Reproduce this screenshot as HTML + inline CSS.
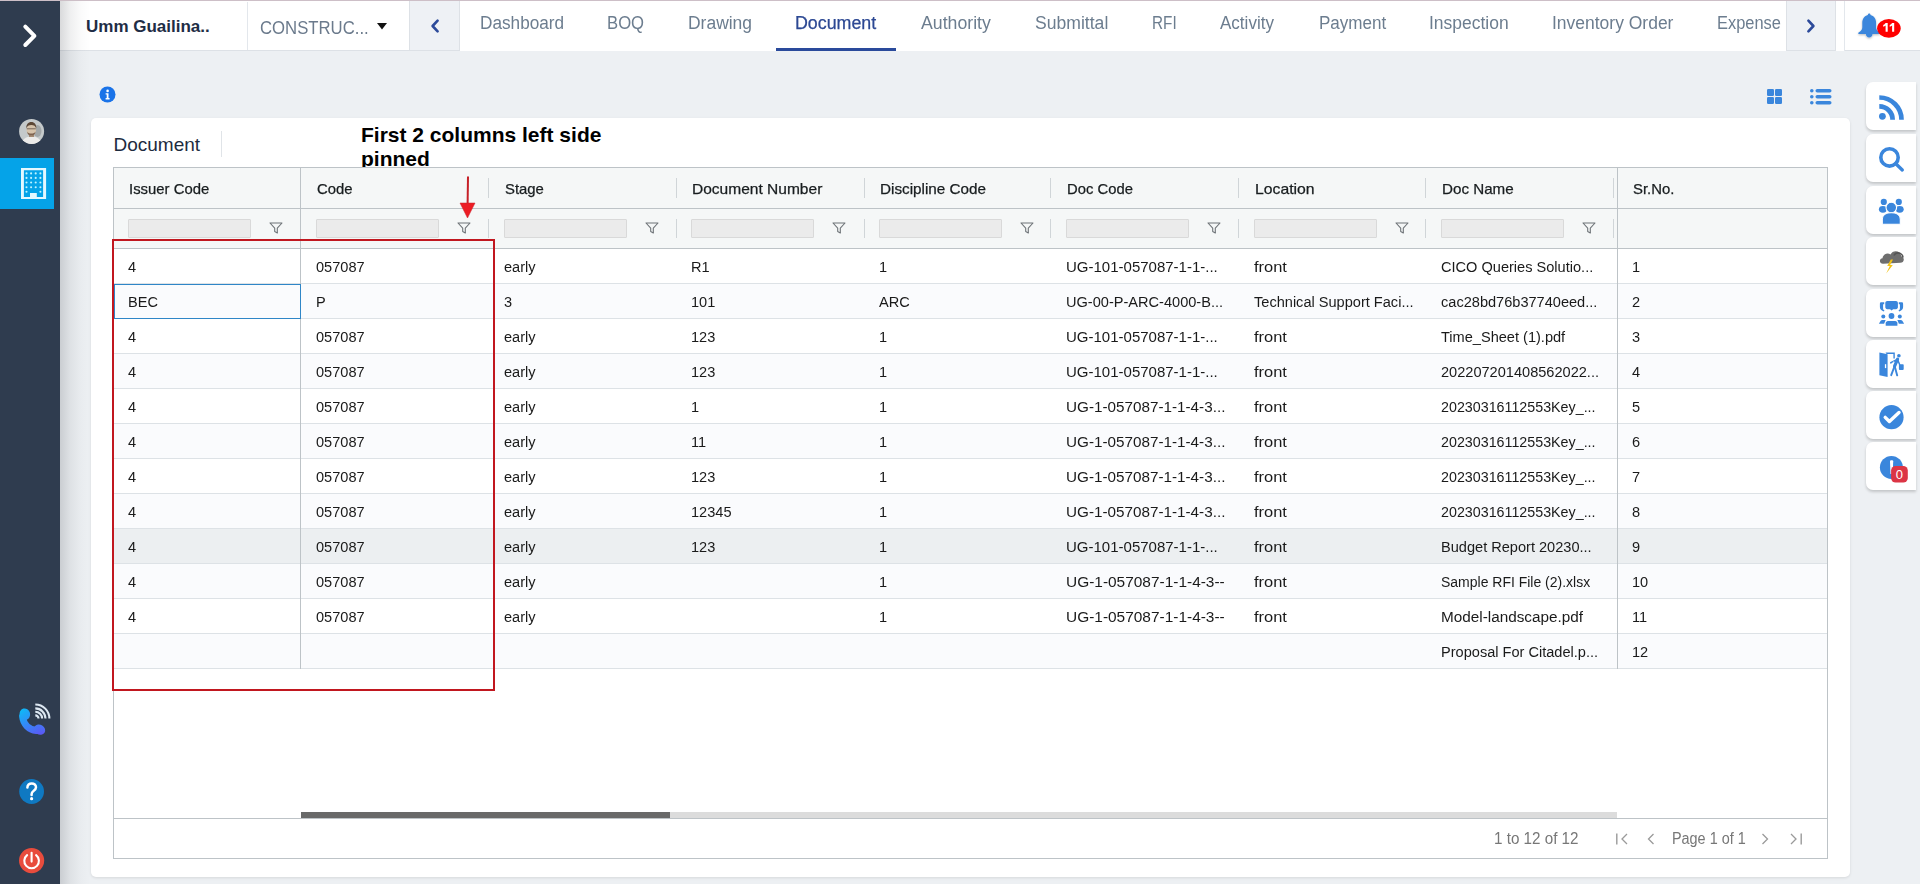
<!DOCTYPE html><html><head><meta charset="utf-8"><style>
*{box-sizing:border-box;margin:0;padding:0}
html,body{width:1920px;height:884px;overflow:hidden;background:#edf0f3;font-family:"Liberation Sans",sans-serif;position:relative}
.a{position:absolute}
.t{position:absolute;white-space:nowrap;line-height:1}
.tab{position:absolute;top:14px;font-size:18px;color:#6c7d8f;white-space:nowrap;line-height:1}
.hd{position:absolute;top:182px;font-size:14.6px;color:#181d1f;white-space:nowrap;line-height:1;-webkit-text-stroke:0.25px #181d1f}
.cell{position:absolute;font-size:15.5px;color:#1a1a1a;white-space:nowrap;line-height:1;transform:scaleX(0.94);transform-origin:0 0}
.fin{position:absolute;top:219px;width:123px;height:19px;background:#ebebeb;border:1px solid #d9d9d9;border-radius:1px}
.rb{position:absolute;left:1866px;width:50px;height:48px;background:#fff;border-radius:7px 0 0 7px;box-shadow:0 2px 3px rgba(0,0,0,0.18)}
</style></head><body>
<div class="a" style="left:60px;top:0;width:1860px;height:51px;background:#fff"></div><div class="a" style="left:60px;top:50px;width:350px;height:1px;background:#dde1e6"></div><div class="a" style="left:1844px;top:50px;width:76px;height:1px;background:#dde1e6"></div><div class="a" style="left:0;top:0;width:1920px;height:1px;background:#cdbfc7"></div><div class="t" style="left:86px;top:18px;font-size:17px;font-weight:700;color:#1e2d45">Umm Guailina..</div><div class="a" style="left:247px;top:2px;width:1px;height:48px;background:#e3e7ec"></div><div class="t" style="left:260px;top:18.6px;font-size:18.5px;color:#6b7a8c;transform:scaleX(0.904);transform-origin:0 0">CONSTRUC...</div><svg class="a" style="left:377px;top:23px" width="10" height="7" viewBox="0 0 10 7"><path d="M0 0H10L5 6.5Z" fill="#111"/></svg><div class="a" style="left:409px;top:1px;width:51px;height:50px;background:#eef1f5;border:1px solid #dde1e6;border-top:none"></div><svg class="a" style="left:429px;top:18px" width="12" height="16" viewBox="0 0 12 16"><path d="M8.6 2.6L3.6 8l5 5.4" fill="none" stroke="#2c4a9a" stroke-width="2.6" stroke-linecap="round" stroke-linejoin="round"/></svg><div class="tab" style="left:479.5px;transform:scaleX(0.955);transform-origin:0 0">Dashboard</div><div class="tab" style="left:607.3px;transform:scaleX(0.927);transform-origin:0 0">BOQ</div><div class="tab" style="left:687.9px;transform:scaleX(0.97);transform-origin:0 0">Drawing</div><div class="tab" style="left:795.1px;transform:scaleX(0.99);transform-origin:0 0;color:#2c4893;-webkit-text-stroke:0.25px #2c4893">Document</div><div class="tab" style="left:920.8px;transform:scaleX(0.983);transform-origin:0 0">Authority</div><div class="tab" style="left:1035.3px;transform:scaleX(0.977);transform-origin:0 0">Submittal</div><div class="tab" style="left:1152.2px;transform:scaleX(0.85);transform-origin:0 0">RFI</div><div class="tab" style="left:1219.8px;transform:scaleX(0.946);transform-origin:0 0">Activity</div><div class="tab" style="left:1318.5px;transform:scaleX(0.947);transform-origin:0 0">Payment</div><div class="tab" style="left:1429.2px;transform:scaleX(0.971);transform-origin:0 0">Inspection</div><div class="tab" style="left:1551.9px;transform:scaleX(0.971);transform-origin:0 0">Inventory Order</div><div class="tab" style="left:1716.7px;transform:scaleX(0.912);transform-origin:0 0">Expense</div><div class="a" style="left:776px;top:48px;width:120px;height:3px;background:#2a4a9b"></div><div class="a" style="left:1786px;top:1px;width:50px;height:50px;background:#eef1f5;border:1px solid #dde1e6;border-top:none"></div><svg class="a" style="left:1805px;top:18px" width="12" height="16" viewBox="0 0 12 16"><path d="M3.4 2.6L8.4 8l-5 5.4" fill="none" stroke="#2c4a9a" stroke-width="2.6" stroke-linecap="round" stroke-linejoin="round"/></svg><div class="a" style="left:1844px;top:1px;width:1px;height:50px;background:#e3e7ec"></div><svg class="a" style="left:1850px;top:8px;overflow:visible" width="56" height="36" viewBox="1850 8 56 36"><defs><filter id="bs" x="-30%" y="-30%" width="160%" height="160%"><feDropShadow dx="0" dy="1" stdDeviation="0.8" flood-color="#000" flood-opacity="0.28"/></filter></defs>
<g filter="url(#bs)" fill="#3a86dc"><path d="M1869.2 13.6C1870 13.6 1870.5 14.2 1870.5 14.9C1874 15.7 1876.1 18.7 1876.1 22.6V27.2C1876.1 29.6 1877.6 31.3 1879.8 32.6C1880.5 33 1880.3 34 1879.5 34H1858.9C1858.1 34 1857.9 33 1858.6 32.6C1860.8 31.3 1862.3 29.6 1862.3 27.2V22.6C1862.3 18.7 1864.4 15.7 1867.9 14.9C1867.9 14.2 1868.4 13.6 1869.2 13.6Z"/>
<path d="M1865.9 34H1872.5C1872.5 36 1871 37.5 1869.2 37.5C1867.4 37.5 1865.9 36 1865.9 34Z"/></g>
<ellipse cx="1888.9" cy="28.35" rx="11.8" ry="9.35" fill="#f00"/>
</svg><svg class="a" style="left:1880px;top:20px" width="18" height="14" viewBox="1880 20 18 14"><path d="M1885.6 23H1887.7V31.8H1885.6V25.6C1884.9 26.1 1884.1 26.5 1883.2 26.7V24.9C1884.2 24.6 1885 24 1885.6 23Z M1892.1 23H1894.2V31.8H1892.1V25.6C1891.4 26.1 1890.6 26.5 1889.7 26.7V24.9C1890.7 24.6 1891.5 24 1892.1 23Z" fill="#fff"/></svg><div class="a" style="left:0;top:1px;width:60px;height:883px;background:#2f3c4f"></div><div class="a" style="left:60px;top:1px;width:30px;height:883px;background:linear-gradient(to right,rgba(30,35,45,0.17),rgba(30,35,45,0.07) 35%,rgba(30,35,45,0.02) 70%,rgba(30,35,45,0))"></div><svg class="a" style="left:20px;top:22px" width="20" height="28" viewBox="0 0 20 28"><path d="M5.3 4.6L14.4 13.8L5.3 23" fill="none" stroke="#fff" stroke-width="4" stroke-linecap="round" stroke-linejoin="round"/></svg><svg class="a" style="left:19px;top:118px" width="26" height="27" viewBox="19 118 26 27"><defs><clipPath id="av"><circle cx="31.6" cy="131.4" r="12.5"/></clipPath><filter id="avb"><feGaussianBlur stdDeviation="0.5"/></filter></defs>
<g clip-path="url(#av)"><rect x="19" y="118" width="26" height="27" fill="#c4c9ca"/>
<g filter="url(#avb)">
<ellipse cx="37.5" cy="131" rx="4" ry="6" fill="#8c9192" opacity="0.6"/>
<path d="M21 145C22 139.5 25.5 136.5 31.6 136.5S41 139.5 42.5 145Z" fill="#ecebe9"/>
<rect x="29" y="133" width="5" height="4" fill="#a48a72"/>
<ellipse cx="31.3" cy="129.8" rx="4.8" ry="5.6" fill="#d6c3ab"/>
<path d="M26.3 128.5C26 124.5 28.2 122 31.3 122S36.6 124.5 36.3 128.5C35.6 126 33.8 125 31.3 125S27 126 26.3 128.5Z" fill="#5b4636"/>
<path d="M27 131.5C27.5 134.5 29.2 135.6 31.3 135.6S35.1 134.5 35.6 131.5C34.8 133 33.3 133.6 31.3 133.6S27.8 133 27 131.5Z" fill="#7e6450"/>
<path d="M26.8 128.8H35.8" stroke="#6a5a4e" stroke-width="0.9"/>
</g></g></svg><div class="a" style="left:0;top:158px;width:54px;height:51px;background:#05a3e8"></div><svg class="a" style="left:16px;top:163px" width="36" height="40" viewBox="16 163 36 40"><path d="M21 168H46.1V199H21Z M23.9 170.3V197H30V193H36.8V197H43.1V170.3Z" fill="#e4f8ff" fill-rule="evenodd"/><circle cx="26.5" cy="173.4" r="1.05" fill="#bff4ff"/><circle cx="31.1" cy="173.4" r="1.05" fill="#bff4ff"/><circle cx="35.7" cy="173.4" r="1.05" fill="#bff4ff"/><circle cx="40.4" cy="173.4" r="1.05" fill="#bff4ff"/><circle cx="26.5" cy="177.9" r="1.05" fill="#bff4ff"/><circle cx="31.1" cy="177.9" r="1.05" fill="#bff4ff"/><circle cx="35.7" cy="177.9" r="1.05" fill="#bff4ff"/><circle cx="40.4" cy="177.9" r="1.05" fill="#bff4ff"/><circle cx="26.5" cy="182.5" r="1.05" fill="#bff4ff"/><circle cx="31.1" cy="182.5" r="1.05" fill="#bff4ff"/><circle cx="35.7" cy="182.5" r="1.05" fill="#bff4ff"/><circle cx="40.4" cy="182.5" r="1.05" fill="#bff4ff"/><circle cx="26.5" cy="187.2" r="1.05" fill="#bff4ff"/><circle cx="31.1" cy="187.2" r="1.05" fill="#bff4ff"/><circle cx="35.7" cy="187.2" r="1.05" fill="#bff4ff"/><circle cx="40.4" cy="187.2" r="1.05" fill="#bff4ff"/><circle cx="26.5" cy="191.7" r="1.05" fill="#bff4ff"/><circle cx="40.4" cy="191.7" r="1.05" fill="#bff4ff"/></svg><svg class="a" style="left:14px;top:700px" width="40" height="40" viewBox="14 700 40 40"><defs><linearGradient id="pg" gradientUnits="userSpaceOnUse" x1="22" y1="708" x2="38" y2="735"><stop offset="0" stop-color="#0bbcf7"/><stop offset="1" stop-color="#5a5af5"/></linearGradient></defs>
<g fill="url(#pg)">
<ellipse cx="24.8" cy="714.2" rx="5.3" ry="5.8" transform="rotate(-15 24.8 714.2)"/>
<ellipse cx="39.6" cy="729.6" rx="5.8" ry="4.9" transform="rotate(32 39.6 729.6)"/>
</g>
<path d="M22.6 716.5C23.4 724 28.5 729.5 36.5 730.5" fill="none" stroke="url(#pg)" stroke-width="7" stroke-linecap="round"/>
<g fill="none" stroke="#dde8f2" stroke-width="2.1">
<path d="M35.3 715.4A3.2 3.2 0 0 1 38.5 718.6"/><path d="M35.3 711.8A6.8 6.8 0 0 1 42.1 718.6"/><path d="M35.3 708.4A10.2 10.2 0 0 1 45.5 718.6"/><path d="M35.3 704.5A14.1 14.1 0 0 1 49.4 718.6"/>
</g></svg><svg class="a" style="left:14px;top:774px" width="36" height="104" viewBox="14 774 36 104">
<circle cx="31.6" cy="791.5" r="12.4" fill="#0f79c2"/>
<path d="M27.4 787.6C27.4 785 29.3 783.4 31.7 783.4C34.2 783.4 36 785.1 36 787.3C36 789.2 34.9 790.1 33.5 791C32.3 791.8 31.6 792.6 31.6 794.2V795" fill="none" stroke="#fff" stroke-width="2.5" stroke-linecap="round"/>
<circle cx="31.6" cy="798.7" r="1.6" fill="#fff"/>
<circle cx="31.6" cy="860.6" r="12.6" fill="#e84c3d"/>
<path d="M27.1 855.2A7.3 7.3 0 1 0 36.1 855.2" fill="none" stroke="#fff" stroke-width="2.1" stroke-linecap="round"/>
<path d="M31.6 852.8V861.6" stroke="#fff" stroke-width="2.1" stroke-linecap="round"/>
</svg><svg class="a" style="left:99px;top:86px" width="17" height="17" viewBox="0 0 17 17"><circle cx="8.5" cy="8.5" r="8" fill="#1a73e8"/><circle cx="8.6" cy="4.9" r="1.3" fill="#fff"/><path d="M6.6 7.2h2.9v4.9h1.1v1.4H6.6v-1.4h1.1V8.6H6.6z" fill="#fff"/></svg><svg class="a" style="left:1767px;top:89px" width="15" height="15" viewBox="0 0 15 15"><g fill="#3a86dc"><rect x="0" y="0" width="7" height="7" rx="1.3"/><rect x="8" y="0" width="7" height="7" rx="1.3"/><rect x="0" y="8" width="7" height="7" rx="1.3"/><rect x="8" y="8" width="7" height="7" rx="1.3"/></g></svg><svg class="a" style="left:1810px;top:89px" width="22" height="16" viewBox="0 0 22 16"><g fill="#3a86dc"><circle cx="1.8" cy="1.8" r="1.8"/><circle cx="1.8" cy="7.8" r="1.8"/><circle cx="1.8" cy="13.8" r="1.8"/><rect x="5.5" y="0" width="16" height="3.6" rx="1.8"/><rect x="5.5" y="6" width="16" height="3.6" rx="1.8"/><rect x="5.5" y="12" width="16" height="3.6" rx="1.8"/></g></svg><div class="a" style="left:91px;top:118px;width:1759px;height:759px;background:#fff;border-radius:5px;box-shadow:0 1px 3px rgba(0,0,0,0.10)"></div><div class="t" style="left:113.5px;top:134.5px;font-size:19px;color:#1d2b3e">Document</div><div class="a" style="left:221px;top:131px;width:1px;height:26px;background:#e0e4e8"></div><div class="t" style="left:361px;top:123px;font-size:21px;font-weight:700;color:#000;line-height:24px">First 2 columns left side<br>pinned</div><div class="a" style="left:113px;top:167px;width:1715px;height:692px;border:1px solid #bdc3c7;background:#fff"></div><div class="a" style="left:114px;top:168px;width:1713px;height:80px;background:#f5f7f7"></div><div class="a" style="left:114px;top:208px;width:1713px;height:1px;background:#bdc3c7"></div><div class="a" style="left:114px;top:248px;width:1713px;height:1px;background:#bdc3c7"></div><div class="a" style="left:114px;top:249px;width:1713px;height:34px;background:#fff"></div><div class="a" style="left:114px;top:283px;width:1713px;height:1px;background:#dde2e6"></div><div class="cell" style="left:128.2px;top:259px;transform:scaleX(0.940)">4</div><div class="cell" style="left:315.7px;top:259px;transform:scaleX(0.940)">057087</div><div class="cell" style="left:503.7px;top:259px;transform:scaleX(0.940)">early</div><div class="cell" style="left:691.2px;top:259px;transform:scaleX(0.940)">R1</div><div class="cell" style="left:878.7px;top:259px;transform:scaleX(0.940)">1</div><div class="cell" style="left:1066.2px;top:259px;transform:scaleX(0.968)">UG-101-057087-1-1-...</div><div class="cell" style="left:1253.7px;top:259px;transform:scaleX(1.062)">front</div><div class="cell" style="left:1441.2px;top:259px;transform:scaleX(0.940)">CICO Queries Solutio...</div><div class="cell" style="left:1632.2px;top:259px;transform:scaleX(0.940)">1</div><div class="a" style="left:114px;top:284px;width:1713px;height:34px;background:#fafbfd"></div><div class="a" style="left:114px;top:318px;width:1713px;height:1px;background:#dde2e6"></div><div class="cell" style="left:128.2px;top:294px;transform:scaleX(0.940)">BEC</div><div class="cell" style="left:315.7px;top:294px;transform:scaleX(0.940)">P</div><div class="cell" style="left:503.7px;top:294px;transform:scaleX(0.940)">3</div><div class="cell" style="left:691.2px;top:294px;transform:scaleX(0.940)">101</div><div class="cell" style="left:878.7px;top:294px;transform:scaleX(0.940)">ARC</div><div class="cell" style="left:1066.2px;top:294px;transform:scaleX(0.940)">UG-00-P-ARC-4000-B...</div><div class="cell" style="left:1253.7px;top:294px;transform:scaleX(0.940)">Technical Support Faci...</div><div class="cell" style="left:1441.2px;top:294px;transform:scaleX(0.940)">cac28bd76b37740eed...</div><div class="cell" style="left:1632.2px;top:294px;transform:scaleX(0.940)">2</div><div class="a" style="left:114px;top:319px;width:1713px;height:34px;background:#fff"></div><div class="a" style="left:114px;top:353px;width:1713px;height:1px;background:#dde2e6"></div><div class="cell" style="left:128.2px;top:329px;transform:scaleX(0.940)">4</div><div class="cell" style="left:315.7px;top:329px;transform:scaleX(0.940)">057087</div><div class="cell" style="left:503.7px;top:329px;transform:scaleX(0.940)">early</div><div class="cell" style="left:691.2px;top:329px;transform:scaleX(0.940)">123</div><div class="cell" style="left:878.7px;top:329px;transform:scaleX(0.940)">1</div><div class="cell" style="left:1066.2px;top:329px;transform:scaleX(0.968)">UG-101-057087-1-1-...</div><div class="cell" style="left:1253.7px;top:329px;transform:scaleX(1.062)">front</div><div class="cell" style="left:1441.2px;top:329px;transform:scaleX(0.940)">Time_Sheet (1).pdf</div><div class="cell" style="left:1632.2px;top:329px;transform:scaleX(0.940)">3</div><div class="a" style="left:114px;top:354px;width:1713px;height:34px;background:#fafbfd"></div><div class="a" style="left:114px;top:388px;width:1713px;height:1px;background:#dde2e6"></div><div class="cell" style="left:128.2px;top:364px;transform:scaleX(0.940)">4</div><div class="cell" style="left:315.7px;top:364px;transform:scaleX(0.940)">057087</div><div class="cell" style="left:503.7px;top:364px;transform:scaleX(0.940)">early</div><div class="cell" style="left:691.2px;top:364px;transform:scaleX(0.940)">123</div><div class="cell" style="left:878.7px;top:364px;transform:scaleX(0.940)">1</div><div class="cell" style="left:1066.2px;top:364px;transform:scaleX(0.968)">UG-101-057087-1-1-...</div><div class="cell" style="left:1253.7px;top:364px;transform:scaleX(1.062)">front</div><div class="cell" style="left:1441.2px;top:364px;transform:scaleX(0.940)">202207201408562022...</div><div class="cell" style="left:1632.2px;top:364px;transform:scaleX(0.940)">4</div><div class="a" style="left:114px;top:389px;width:1713px;height:34px;background:#fff"></div><div class="a" style="left:114px;top:423px;width:1713px;height:1px;background:#dde2e6"></div><div class="cell" style="left:128.2px;top:399px;transform:scaleX(0.940)">4</div><div class="cell" style="left:315.7px;top:399px;transform:scaleX(0.940)">057087</div><div class="cell" style="left:503.7px;top:399px;transform:scaleX(0.940)">early</div><div class="cell" style="left:691.2px;top:399px;transform:scaleX(0.940)">1</div><div class="cell" style="left:878.7px;top:399px;transform:scaleX(0.940)">1</div><div class="cell" style="left:1066.2px;top:399px;transform:scaleX(0.984)">UG-1-057087-1-1-4-3...</div><div class="cell" style="left:1253.7px;top:399px;transform:scaleX(1.062)">front</div><div class="cell" style="left:1441.2px;top:399px;transform:scaleX(0.921)">20230316112553Key_...</div><div class="cell" style="left:1632.2px;top:399px;transform:scaleX(0.940)">5</div><div class="a" style="left:114px;top:424px;width:1713px;height:34px;background:#fafbfd"></div><div class="a" style="left:114px;top:458px;width:1713px;height:1px;background:#dde2e6"></div><div class="cell" style="left:128.2px;top:434px;transform:scaleX(0.940)">4</div><div class="cell" style="left:315.7px;top:434px;transform:scaleX(0.940)">057087</div><div class="cell" style="left:503.7px;top:434px;transform:scaleX(0.940)">early</div><div class="cell" style="left:691.2px;top:434px;transform:scaleX(0.940)">11</div><div class="cell" style="left:878.7px;top:434px;transform:scaleX(0.940)">1</div><div class="cell" style="left:1066.2px;top:434px;transform:scaleX(0.984)">UG-1-057087-1-1-4-3...</div><div class="cell" style="left:1253.7px;top:434px;transform:scaleX(1.062)">front</div><div class="cell" style="left:1441.2px;top:434px;transform:scaleX(0.921)">20230316112553Key_...</div><div class="cell" style="left:1632.2px;top:434px;transform:scaleX(0.940)">6</div><div class="a" style="left:114px;top:459px;width:1713px;height:34px;background:#fff"></div><div class="a" style="left:114px;top:493px;width:1713px;height:1px;background:#dde2e6"></div><div class="cell" style="left:128.2px;top:469px;transform:scaleX(0.940)">4</div><div class="cell" style="left:315.7px;top:469px;transform:scaleX(0.940)">057087</div><div class="cell" style="left:503.7px;top:469px;transform:scaleX(0.940)">early</div><div class="cell" style="left:691.2px;top:469px;transform:scaleX(0.940)">123</div><div class="cell" style="left:878.7px;top:469px;transform:scaleX(0.940)">1</div><div class="cell" style="left:1066.2px;top:469px;transform:scaleX(0.984)">UG-1-057087-1-1-4-3...</div><div class="cell" style="left:1253.7px;top:469px;transform:scaleX(1.062)">front</div><div class="cell" style="left:1441.2px;top:469px;transform:scaleX(0.921)">20230316112553Key_...</div><div class="cell" style="left:1632.2px;top:469px;transform:scaleX(0.940)">7</div><div class="a" style="left:114px;top:494px;width:1713px;height:34px;background:#fafbfd"></div><div class="a" style="left:114px;top:528px;width:1713px;height:1px;background:#dde2e6"></div><div class="cell" style="left:128.2px;top:504px;transform:scaleX(0.940)">4</div><div class="cell" style="left:315.7px;top:504px;transform:scaleX(0.940)">057087</div><div class="cell" style="left:503.7px;top:504px;transform:scaleX(0.940)">early</div><div class="cell" style="left:691.2px;top:504px;transform:scaleX(0.940)">12345</div><div class="cell" style="left:878.7px;top:504px;transform:scaleX(0.940)">1</div><div class="cell" style="left:1066.2px;top:504px;transform:scaleX(0.984)">UG-1-057087-1-1-4-3...</div><div class="cell" style="left:1253.7px;top:504px;transform:scaleX(1.062)">front</div><div class="cell" style="left:1441.2px;top:504px;transform:scaleX(0.921)">20230316112553Key_...</div><div class="cell" style="left:1632.2px;top:504px;transform:scaleX(0.940)">8</div><div class="a" style="left:114px;top:529px;width:1713px;height:34px;background:#eceff1"></div><div class="a" style="left:114px;top:563px;width:1713px;height:1px;background:#dde2e6"></div><div class="cell" style="left:128.2px;top:539px;transform:scaleX(0.940)">4</div><div class="cell" style="left:315.7px;top:539px;transform:scaleX(0.940)">057087</div><div class="cell" style="left:503.7px;top:539px;transform:scaleX(0.940)">early</div><div class="cell" style="left:691.2px;top:539px;transform:scaleX(0.940)">123</div><div class="cell" style="left:878.7px;top:539px;transform:scaleX(0.940)">1</div><div class="cell" style="left:1066.2px;top:539px;transform:scaleX(0.968)">UG-101-057087-1-1-...</div><div class="cell" style="left:1253.7px;top:539px;transform:scaleX(1.062)">front</div><div class="cell" style="left:1441.2px;top:539px;transform:scaleX(0.940)">Budget Report 20230...</div><div class="cell" style="left:1632.2px;top:539px;transform:scaleX(0.940)">9</div><div class="a" style="left:114px;top:564px;width:1713px;height:34px;background:#fafbfd"></div><div class="a" style="left:114px;top:598px;width:1713px;height:1px;background:#dde2e6"></div><div class="cell" style="left:128.2px;top:574px;transform:scaleX(0.940)">4</div><div class="cell" style="left:315.7px;top:574px;transform:scaleX(0.940)">057087</div><div class="cell" style="left:503.7px;top:574px;transform:scaleX(0.940)">early</div><div class="cell" style="left:878.7px;top:574px;transform:scaleX(0.940)">1</div><div class="cell" style="left:1066.2px;top:574px;transform:scaleX(0.996)">UG-1-057087-1-1-4-3--</div><div class="cell" style="left:1253.7px;top:574px;transform:scaleX(1.062)">front</div><div class="cell" style="left:1441.2px;top:574px;transform:scaleX(0.902)">Sample RFI File (2).xlsx</div><div class="cell" style="left:1632.2px;top:574px;transform:scaleX(0.940)">10</div><div class="a" style="left:114px;top:599px;width:1713px;height:34px;background:#fff"></div><div class="a" style="left:114px;top:633px;width:1713px;height:1px;background:#dde2e6"></div><div class="cell" style="left:128.2px;top:609px;transform:scaleX(0.940)">4</div><div class="cell" style="left:315.7px;top:609px;transform:scaleX(0.940)">057087</div><div class="cell" style="left:503.7px;top:609px;transform:scaleX(0.940)">early</div><div class="cell" style="left:878.7px;top:609px;transform:scaleX(0.940)">1</div><div class="cell" style="left:1066.2px;top:609px;transform:scaleX(0.996)">UG-1-057087-1-1-4-3--</div><div class="cell" style="left:1253.7px;top:609px;transform:scaleX(1.062)">front</div><div class="cell" style="left:1441.2px;top:609px;transform:scaleX(0.987)">Model-landscape.pdf</div><div class="cell" style="left:1632.2px;top:609px;transform:scaleX(0.940)">11</div><div class="a" style="left:114px;top:634px;width:1713px;height:34px;background:#fafbfd"></div><div class="a" style="left:114px;top:668px;width:1713px;height:1px;background:#dde2e6"></div><div class="cell" style="left:1441.2px;top:644px;transform:scaleX(0.940)">Proposal For Citadel.p...</div><div class="cell" style="left:1632.2px;top:644px;transform:scaleX(0.940)">12</div><div class="a" style="left:300px;top:168px;width:1px;height:501px;background:#bdc3c7"></div><div class="a" style="left:1617px;top:168px;width:1px;height:501px;background:#bdc3c7"></div><div class="a" style="left:114px;top:284px;width:187px;height:35px;border:1px solid #2f86c7;background:transparent"></div><div class="hd" style="left:129px;transform:scaleX(1.02);transform-origin:0 0">Issuer Code</div><div class="hd" style="left:316.5px;transform:scaleX(1.02);transform-origin:0 0">Code</div><div class="hd" style="left:504.5px;transform:scaleX(1.02);transform-origin:0 0">Stage</div><div class="hd" style="left:692px;transform:scaleX(1.064);transform-origin:0 0">Document Number</div><div class="hd" style="left:879.5px;transform:scaleX(1.046);transform-origin:0 0">Discipline Code</div><div class="hd" style="left:1067px;transform:scaleX(1.016);transform-origin:0 0">Doc Code</div><div class="hd" style="left:1254.5px;transform:scaleX(1.08);transform-origin:0 0">Location</div><div class="hd" style="left:1442px;transform:scaleX(1.04);transform-origin:0 0">Doc Name</div><div class="hd" style="left:1633px;transform:scaleX(1.02);transform-origin:0 0">Sr.No.</div><div class="fin" style="left:128px"></div><svg class="a" style="left:269px;top:222px" width="14" height="12" viewBox="0 0 14 12"><path d="M1 1h12L8.3 6.2V11L5.7 9.6V6.2z" fill="none" stroke="#6f7478" stroke-width="1.1" stroke-linejoin="round"/></svg><div class="fin" style="left:315.5px"></div><svg class="a" style="left:456.5px;top:222px" width="14" height="12" viewBox="0 0 14 12"><path d="M1 1h12L8.3 6.2V11L5.7 9.6V6.2z" fill="none" stroke="#6f7478" stroke-width="1.1" stroke-linejoin="round"/></svg><div class="fin" style="left:503.5px"></div><svg class="a" style="left:644.5px;top:222px" width="14" height="12" viewBox="0 0 14 12"><path d="M1 1h12L8.3 6.2V11L5.7 9.6V6.2z" fill="none" stroke="#6f7478" stroke-width="1.1" stroke-linejoin="round"/></svg><div class="fin" style="left:691px"></div><svg class="a" style="left:832px;top:222px" width="14" height="12" viewBox="0 0 14 12"><path d="M1 1h12L8.3 6.2V11L5.7 9.6V6.2z" fill="none" stroke="#6f7478" stroke-width="1.1" stroke-linejoin="round"/></svg><div class="fin" style="left:878.5px"></div><svg class="a" style="left:1019.5px;top:222px" width="14" height="12" viewBox="0 0 14 12"><path d="M1 1h12L8.3 6.2V11L5.7 9.6V6.2z" fill="none" stroke="#6f7478" stroke-width="1.1" stroke-linejoin="round"/></svg><div class="fin" style="left:1066px"></div><svg class="a" style="left:1207px;top:222px" width="14" height="12" viewBox="0 0 14 12"><path d="M1 1h12L8.3 6.2V11L5.7 9.6V6.2z" fill="none" stroke="#6f7478" stroke-width="1.1" stroke-linejoin="round"/></svg><div class="fin" style="left:1253.5px"></div><svg class="a" style="left:1394.5px;top:222px" width="14" height="12" viewBox="0 0 14 12"><path d="M1 1h12L8.3 6.2V11L5.7 9.6V6.2z" fill="none" stroke="#6f7478" stroke-width="1.1" stroke-linejoin="round"/></svg><div class="fin" style="left:1441px"></div><svg class="a" style="left:1582px;top:222px" width="14" height="12" viewBox="0 0 14 12"><path d="M1 1h12L8.3 6.2V11L5.7 9.6V6.2z" fill="none" stroke="#6f7478" stroke-width="1.1" stroke-linejoin="round"/></svg><div class="a" style="left:488px;top:178px;width:1px;height:20px;background:#d0d5d8"></div><div class="a" style="left:488px;top:219px;width:1px;height:19px;background:#d0d5d8"></div><div class="a" style="left:676px;top:178px;width:1px;height:20px;background:#d0d5d8"></div><div class="a" style="left:676px;top:219px;width:1px;height:19px;background:#d0d5d8"></div><div class="a" style="left:864px;top:178px;width:1px;height:20px;background:#d0d5d8"></div><div class="a" style="left:864px;top:219px;width:1px;height:19px;background:#d0d5d8"></div><div class="a" style="left:1050px;top:178px;width:1px;height:20px;background:#d0d5d8"></div><div class="a" style="left:1050px;top:219px;width:1px;height:19px;background:#d0d5d8"></div><div class="a" style="left:1238px;top:178px;width:1px;height:20px;background:#d0d5d8"></div><div class="a" style="left:1238px;top:219px;width:1px;height:19px;background:#d0d5d8"></div><div class="a" style="left:1425px;top:178px;width:1px;height:20px;background:#d0d5d8"></div><div class="a" style="left:1425px;top:219px;width:1px;height:19px;background:#d0d5d8"></div><div class="a" style="left:1613px;top:178px;width:1px;height:20px;background:#d0d5d8"></div><div class="a" style="left:1613px;top:219px;width:1px;height:19px;background:#d0d5d8"></div><div class="a" style="left:301px;top:812px;width:1316px;height:6px;background:#dcdcdc"></div><div class="a" style="left:301px;top:812px;width:369px;height:6px;background:#696969"></div><div class="a" style="left:114px;top:818px;width:1713px;height:1px;background:#bdc3c7"></div><div class="t" style="left:1494px;top:831px;font-size:16px;color:#777;transform:scaleX(0.95);transform-origin:0 0">1 to 12 of 12</div><div class="t" style="left:1672px;top:831px;font-size:16px;color:#777;transform:scaleX(0.9);transform-origin:0 0">Page 1 of 1</div><svg class="a" style="left:1615px;top:832px" width="14" height="14" viewBox="0 0 14 14"><path d="M12 2L7 7l5 5" fill="none" stroke="#9a9a9a" stroke-width="1.3"/><path d="M1.8 1.5v11" stroke="#9a9a9a" stroke-width="1.4"/></svg><svg class="a" style="left:1645px;top:832px" width="14" height="14" viewBox="0 0 14 14"><path d="M8.5 2L3.5 7l5 5" fill="none" stroke="#9a9a9a" stroke-width="1.3"/></svg><svg class="a" style="left:1759px;top:832px" width="14" height="14" viewBox="0 0 14 14"><path d="M3.5 2l5 5-5 5" fill="none" stroke="#9a9a9a" stroke-width="1.3"/></svg><svg class="a" style="left:1789px;top:832px" width="14" height="14" viewBox="0 0 14 14"><path d="M2 2l5 5-5 5" fill="none" stroke="#9a9a9a" stroke-width="1.3"/><path d="M12.2 1.5v11" stroke="#9a9a9a" stroke-width="1.4"/></svg><div class="a" style="left:112px;top:239px;width:383px;height:452px;border:2px solid #c1171f"></div><svg class="a" style="left:458px;top:175px" width="18" height="44" viewBox="0 0 18 44"><path d="M10 1.5L9.6 30" stroke="#c62028" stroke-width="2"/><path d="M2 28h15l-7.5 15z" fill="#ec1c24" stroke="#c9202a" stroke-width="0.5"/></svg><div class="rb" style="top:82px"></div><div class="rb" style="top:134px"></div><div class="rb" style="top:186px"></div><div class="rb" style="top:237px"></div><div class="rb" style="top:289px"></div><div class="rb" style="top:340px"></div><div class="rb" style="top:391px"></div><div class="rb" style="top:442px"></div><svg class="a" style="left:1866px;top:82px" width="54" height="420" viewBox="1866 82 54 420">
<!-- rss -->
<circle cx="1882.4" cy="116.3" r="3.4" fill="#3a86dc"/>
<path d="M1879.3 106.4A13.3 13.3 0 0 1 1892.6 119.7" fill="none" stroke="#3a86dc" stroke-width="4.8"/>
<path d="M1879.3 97.5A22.2 22.2 0 0 1 1901.5 119.7" fill="none" stroke="#3a86dc" stroke-width="4.7"/>
<!-- search -->
<circle cx="1889.5" cy="157.4" r="8.7" fill="none" stroke="#3a86dc" stroke-width="3.6"/>
<path d="M1895.6 163.6L1902.3 169.9" stroke="#3a86dc" stroke-width="3.4" stroke-linecap="round"/>
<!-- team -->
<g fill="#3a86dc">
<circle cx="1883.8" cy="201.9" r="3.1"/><circle cx="1898.8" cy="201.9" r="3.1"/>
<ellipse cx="1882.9" cy="209.3" rx="4" ry="3.4"/><ellipse cx="1899.7" cy="209.3" rx="4" ry="3.4"/>
</g>
<g fill="#3a86dc" stroke="#fff" stroke-width="1.1">
<circle cx="1891.3" cy="207.6" r="5.3"/>
<path d="M1882.3 224.2V219.3C1882.3 215.3 1886 212.8 1891.3 212.8S1900.3 215.3 1900.3 219.3V224.2Z"/>
</g>
<!-- storm -->
<path d="M1883 263.8c-1.8 0-3.1-1.2-3.1-2.8 0-1.5 1.1-2.7 2.6-2.8.3-2.6 2.4-4.6 5-4.6 1.1 0 2.2.4 3 1 1-2.1 3-3.3 5.2-3.3 2.9 0 5.2 2.1 5.5 4.9 1.5.4 2.6 1.7 2.6 3.3 0 2-1.5 3.3-3.4 3.3z" fill="#6e6e6e"/>
<path d="M1894 255.5c.8-1.6 2.3-2.6 4-2.6 2.6 0 4.8 2 5 4.6" fill="none" stroke="#555" stroke-width="1.6"/>
<path d="M1890.8 259.5l-3.6 6.4h2.6l-3.6 7.7 6.6-8.6h-2.7l2.9-5.5z" fill="#f2c318"/>
<!-- meeting -->
<g fill="#3a86dc">
<path d="M1887.2 300.9h8.8c1 0 1.9.9 1.9 1.9v4.5c0 1-.9 1.9-1.9 1.9h-2.9l-1.5 1.4-1.5-1.4h-2.9c-1 0-1.9-.9-1.9-1.9v-4.5c0-1 .9-1.9 1.9-1.9z"/>
<path d="M1880.9 302.3h3.3v1.9h-1.1v4.3c0 .7.3 1.2.8 1.6l.6.5-.7 1-1.5-.9c-1.5-.9-2.4-2.2-2.4-3.8v-3.1c0-.8.5-1.5 1-1.5z"/>
<path d="M1902.1 302.3h-3.3v1.9h1.1v4.3c0 .7-.3 1.2-.8 1.6l-.6.5.7 1 1.5-.9c1.5-.9 2.4-2.2 2.4-3.8v-3.1c0-.8-.5-1.5-1-1.5z"/>
<circle cx="1891.5" cy="316" r="2.9"/>
<circle cx="1883.3" cy="316.5" r="2"/><circle cx="1899.8" cy="316.5" r="2"/>
<path d="M1885.7 325.7v-2.4c0-1.2 1-2.2 2.2-2.2h7.3c1.2 0 2.2 1 2.2 2.2v2.4z"/>
<path d="M1878.9 323.8l1.6-2.8c.4-.7 1.1-1.1 1.9-1.1h3.3l-1.6 3.9z"/>
<path d="M1904.1 323.8l-1.6-2.8c-.4-.7-1.1-1.1-1.9-1.1h-3.3l1.6 3.9z"/>
</g>
<!-- exit -->
<g fill="#3a86dc">
<path d="M1879.4 352.6L1887.6 354.3V376.9L1879.4 375.3Z"/>
<path d="M1885.5 352.6H1894.8V358.6H1893.4V354H1886.6Z"/>
<circle cx="1898.9" cy="355.8" r="1.8"/>
<rect x="1898.9" y="364.2" width="4.8" height="5.8" rx="0.9"/>
</g>
<rect x="1884.9" y="364.2" width="1.3" height="3.9" fill="#fff"/>
<g stroke="#3a86dc" fill="none" stroke-linecap="round">
<path d="M1897.6 359.2L1894.6 366.2" stroke-width="3.2"/>
<path d="M1896.8 359.8L1890.8 362.8" stroke-width="1.6"/>
<path d="M1894.6 366.2L1891.2 375.2" stroke-width="1.9"/>
<path d="M1894.8 366.4L1897.2 375.4" stroke-width="1.9"/>
<path d="M1897.8 360L1899.6 364.6" stroke-width="1.5"/>
</g>
<path d="M1888.3 376.5L1893.5 361.5" stroke="#fff" stroke-width="0.9"/>
<!-- check -->
<circle cx="1891.5" cy="417.2" r="12.1" fill="#3a86dc"/>
<path d="M1885.2 417.4l4.2 4.1 9.6-9" fill="none" stroke="#fff" stroke-width="3.4" stroke-linecap="round" stroke-linejoin="round"/>
<!-- alert -->
<circle cx="1891.4" cy="467.4" r="11.5" fill="#3a86dc"/>
<path d="M1890 461.2c0-.6.7-1 1.6-1s1.6.4 1.6 1l-.5 12.8h-2.2z" fill="#fff"/>
<rect x="1891.1" y="466" width="16.7" height="16.6" rx="4.5" fill="#dc3545"/>
<text x="1899.4" y="479.4" font-family="Liberation Sans" font-size="13" fill="#fff" text-anchor="middle">0</text>
</svg></body></html>
